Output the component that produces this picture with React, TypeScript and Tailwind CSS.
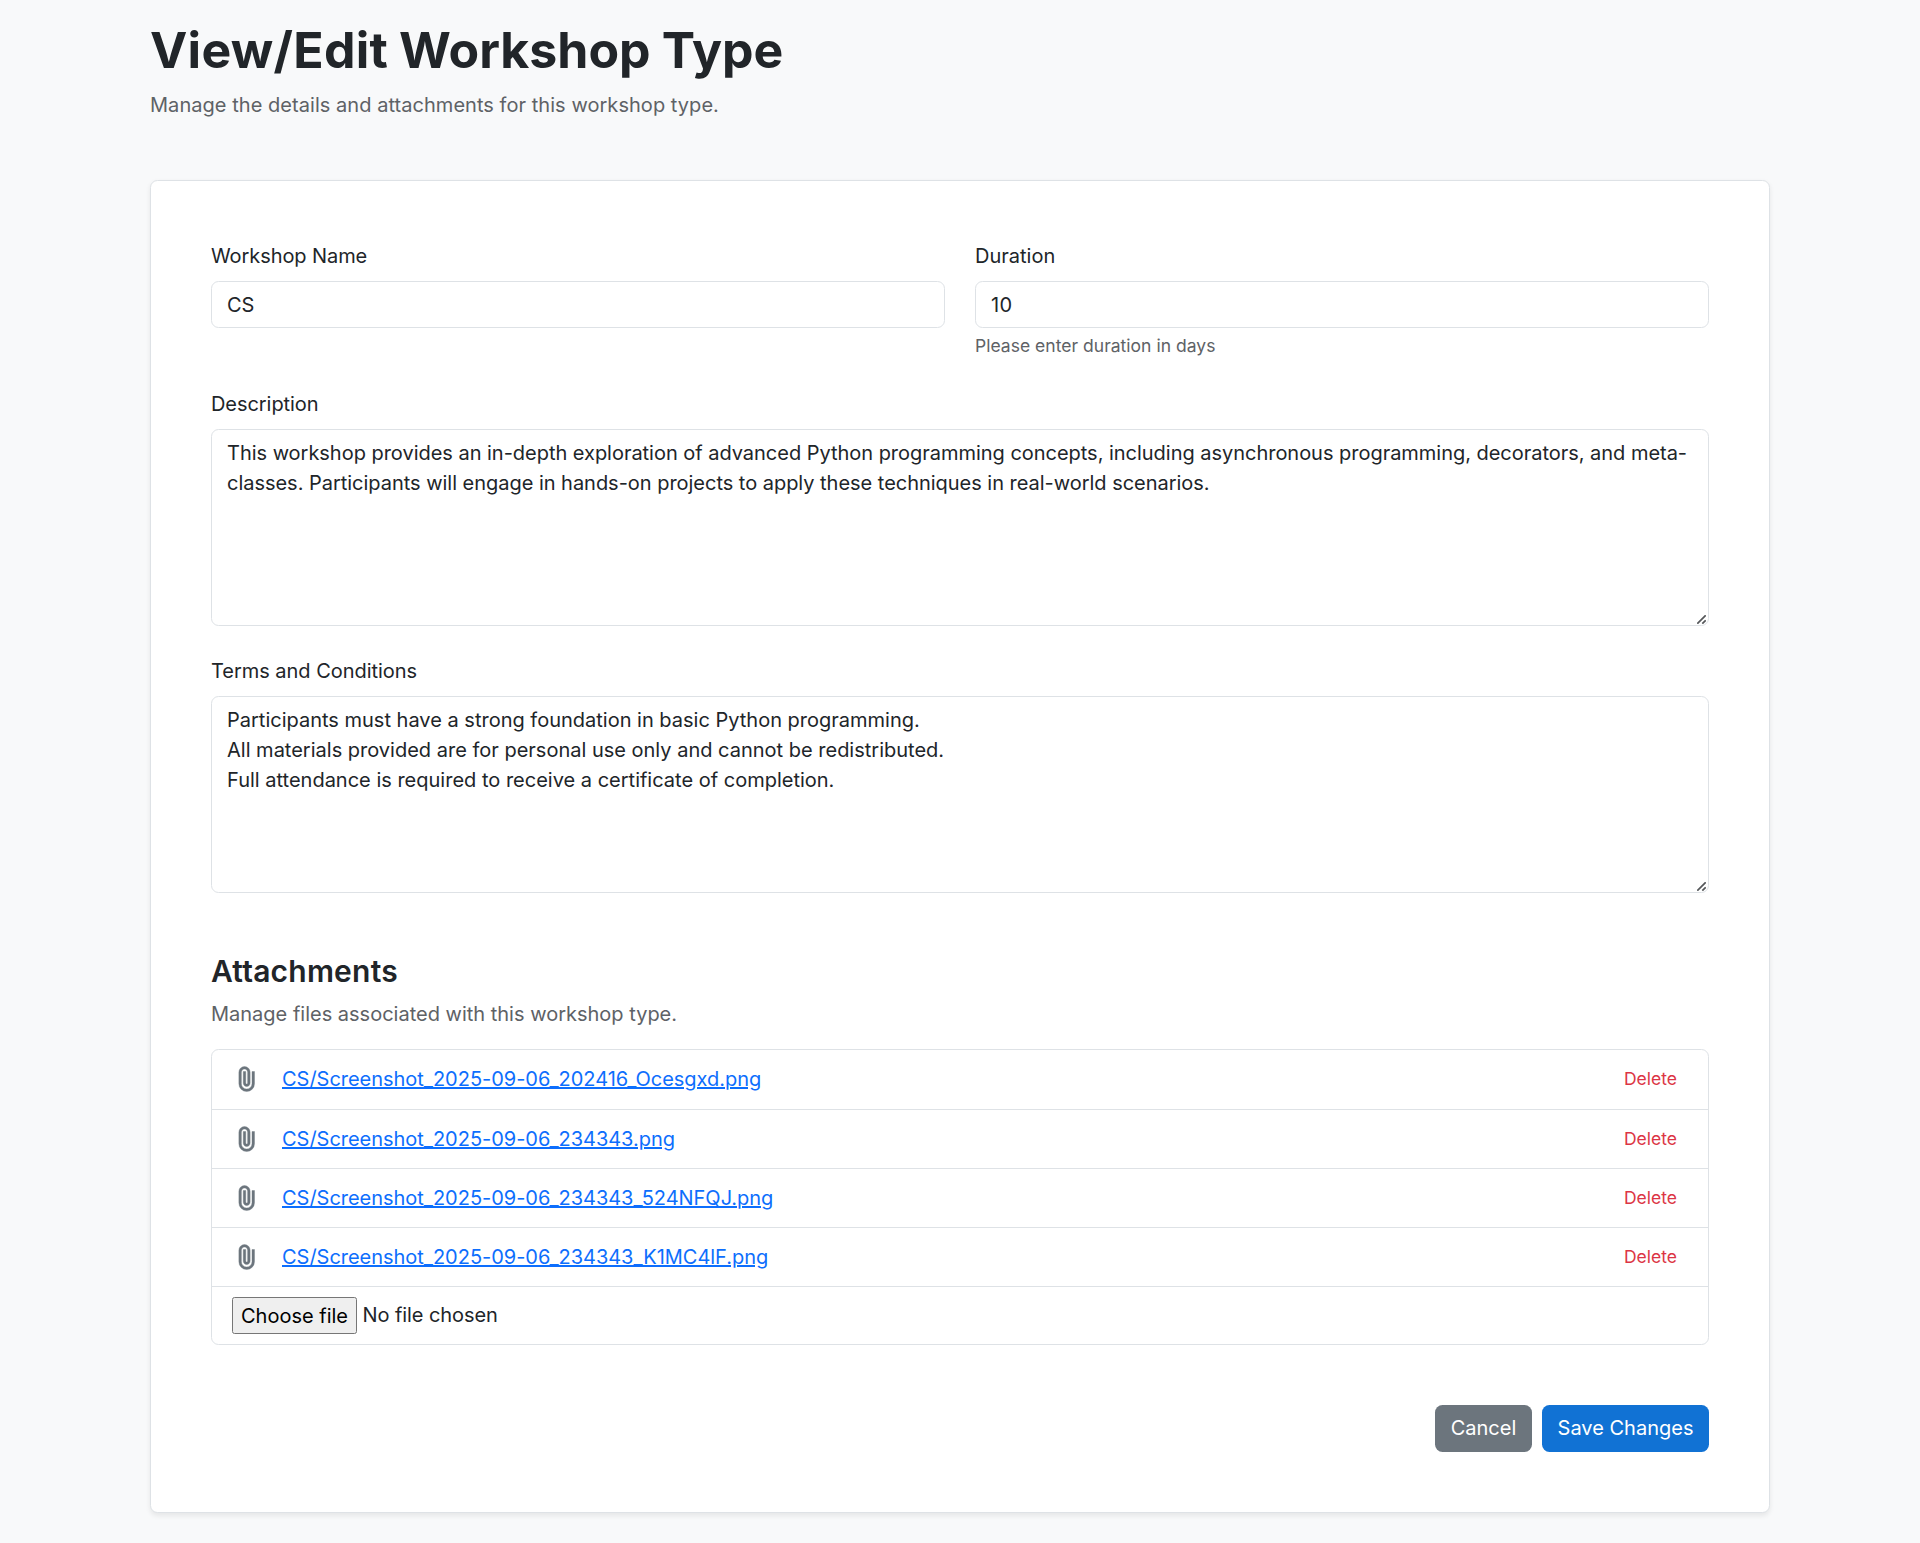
import React from "react";

const files = [
  "CS/Screenshot_2025-09-06_202416_Ocesgxd.png",
  "CS/Screenshot_2025-09-06_234343.png",
  "CS/Screenshot_2025-09-06_234343_524NFQJ.png",
  "CS/Screenshot_2025-09-06_234343_K1MC4lF.png",
];

const field =
  "block w-full rounded-[7.5px] border border-[#dee2e6] bg-white px-[15px] text-[20px] leading-[30px] text-[#212529] outline-none";

function TextArea({ value, className }: { value: string; className: string }) {
  return (
    <div className="relative">
      <textarea className={field + " h-[197px] resize-none py-[8px] " + className} defaultValue={value} />
      <svg className="pointer-events-none absolute right-[3px] bottom-[2px] h-[9px] w-[9px]" viewBox="0 0 9 9" stroke="#55575a" strokeWidth="1.7">
        <path d="M0.300 8.700L8.700 0.300M5.300 8.700L8.700 5.300" />
      </svg>
    </div>
  );
}

export default function App() {
  return (
    <div className="min-h-[1543px] bg-[#f8f9fa] px-[150px] pt-5 font-['Inter',sans-serif] text-[20px] leading-[30px] text-[#212529]">
      <h1 className="text-[50px] leading-[60px] font-bold [word-spacing:-0.8px]">
        <span className="tracking-[0.27px]">View/Edit</span> Workshop Type
      </h1>
      <p className="mt-[10px] tracking-[0.045px] text-[#5e6266]">Manage the details and attachments for this workshop type.</p>
      <form className="mt-[60px] rounded-[7.5px] border border-[#dee2e6] bg-white p-[60px] shadow-[0_2.5px_5px_rgba(0,0,0,0.075)]">
        <div className="grid grid-cols-2 gap-[30px]">
          <div>
            <label className="mb-[10px] block tracking-[-0.08px]">Workshop Name</label>
            <input className={field + " h-[47px]"} defaultValue="CS" />
          </div>
          <div>
            <label className="mb-[10px] block">Duration</label>
            <input className={field + " h-[47px] tracking-[0.3px]"} defaultValue="10" />
            <div className="mt-[5px] text-[17.5px] leading-[26px] tracking-[0.02px] text-[#5e6266]">Please enter duration in days</div>
          </div>
        </div>
        <label className="mt-[30px] mb-[10px] block tracking-[-0.06px]">Description</label>
        <TextArea
          className="tracking-[-0.026px]"
          value="This workshop provides an in-depth exploration of advanced Python programming concepts, including asynchronous programming, decorators, and meta-classes. Participants will engage in hands-on projects to apply these techniques in real-world scenarios."
        />
        <label className="mt-[30px] mb-[10px] block tracking-[-0.03px]">Terms and Conditions</label>
        <TextArea
          className=""
          value={"Participants must have a strong foundation in basic Python programming.\nAll materials provided are for personal use only and cannot be redistributed.\nFull attendance is required to receive a certificate of completion."}
        />
        <h2 className="mt-[60px] text-[30px] leading-[36px] font-semibold tracking-[0.22px]">Attachments</h2>
        <p className="mt-[10px] text-[#5e6266]">Manage files associated with this workshop type.</p>
        <ul className="mt-5 rounded-[7.5px] border border-[#dee2e6]">
          {files.map((f) => (
            <li key={f} className="flex h-[59px] items-center border-b border-[#dee2e6] px-[20px] first:h-[60px] first:pb-px">
              <svg className="h-[30px] w-[30px] text-[#6c757d]" viewBox="0 -960 960 960" fill="currentColor" stroke="currentColor" strokeWidth="12">
                <path d="M720-330q0 104-73 177T470-80q-104 0-177-73t-73-177v-370q0-75 52.500-127.500T400-880q75 0 127.500 52.500T580-700v350q0 46-32 78t-78 32q-46 0-78-32t-32-78v-370h80v370q0 13 8.500 21.500T470-320q13 0 21.500-8.500T500-350v-350q-1-42-29.500-71T400-800q-42 0-71 29t-29 71v370q-1 71 49 120.500T470-160q70 0 119-49.500T640-330v-390h80v390Z" />
              </svg>
              <a href="#" className="ml-[20px] tracking-[-0.024px] text-[#0d6efd] underline">{f}</a>
              <button type="button" className="ml-auto px-[11px] text-[17.5px] text-[#dc3545]">Delete</button>
            </li>
          ))}
          <li className="flex h-[57px] items-center px-[20px]">
            <button type="button" className="h-[37px] w-[125px] rounded-[2.5px] border border-[#767676] bg-[#efefef] pt-px whitespace-nowrap text-black">Choose file</button>
            <span className="ml-[5.5px] pb-[2px] tracking-[-0.08px]">No file chosen</span>
          </li>
        </ul>
        <div className="mt-[60px] flex justify-end gap-[10px] text-white">
          <button type="button" className="h-[47px] w-[97px] rounded-[7.5px] bg-[#6c757d] pb-px">Cancel</button>
          <button type="button" className="h-[47px] w-[167px] rounded-[7.5px] bg-[#1172d4] pb-px whitespace-nowrap">Save Changes</button>
        </div>
      </form>
    </div>
  );
}
